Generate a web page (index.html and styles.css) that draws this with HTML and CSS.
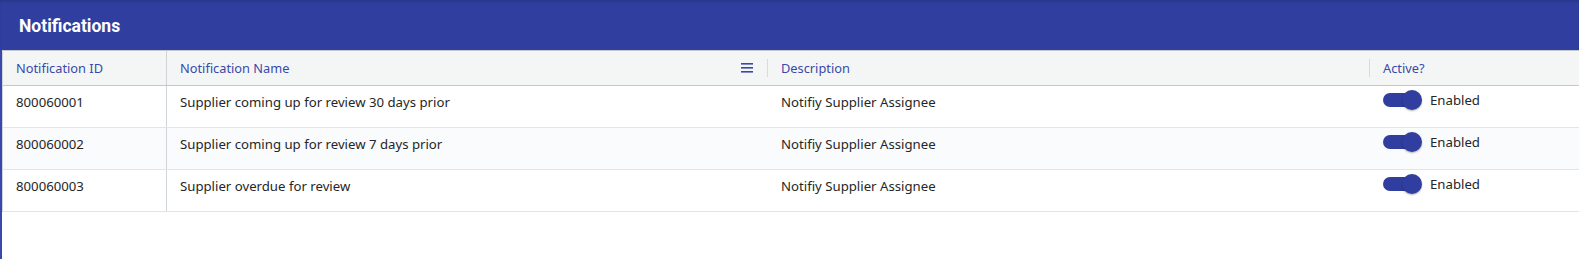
FILE: index.html
```html
<!DOCTYPE html>
<html lang="en">
<head>
  <meta charset="UTF-8">
  <title>Notifications</title>
  <link rel="stylesheet" href="styles.css">
</head>
<body>

  <div class="panel">
    <div class="panel-title">Notifications</div>

    <div class="grid">
      <div class="row head">
        <div class="cell c-id">Notification ID</div>
        <div class="cell c-name">
          <span>Notification Name</span>
          <svg class="menu" width="12" height="10" viewBox="0 0 12 10">
            <rect x="0" y="0" width="12" height="1.6" fill="#3949ab"/>
            <rect x="0" y="4" width="12" height="1.6" fill="#3949ab"/>
            <rect x="0" y="8" width="12" height="1.6" fill="#3949ab"/>
          </svg>
          <span class="handle"></span>
        </div>
        <div class="cell c-desc">
          <span>Description</span>
          <span class="handle"></span>
        </div>
        <div class="cell c-active">Active?</div>
      </div>

      <div class="row">
        <div class="cell c-id">800060001</div>
        <div class="cell c-name">Supplier coming up for review 30 days prior</div>
        <div class="cell c-desc">Notifiy Supplier Assignee</div>
        <div class="cell c-active"><span class="toggle"><span class="knob"></span></span>Enabled</div>
      </div>

      <div class="row alt">
        <div class="cell c-id">800060002</div>
        <div class="cell c-name">Supplier coming up for review 7 days prior</div>
        <div class="cell c-desc">Notifiy Supplier Assignee</div>
        <div class="cell c-active"><span class="toggle"><span class="knob"></span></span>Enabled</div>
      </div>

      <div class="row">
        <div class="cell c-id">800060003</div>
        <div class="cell c-name">Supplier overdue for review</div>
        <div class="cell c-desc">Notifiy Supplier Assignee</div>
        <div class="cell c-active"><span class="toggle"><span class="knob"></span></span>Enabled</div>
      </div>
    </div>
  </div>

</body>
</html>
```

FILE: styles.css
```css
body {
  margin: 0;
  font-family: "Noto Sans", "Open Sans", sans-serif;
  background-color: white;
}

.panel {
  height: 259px;
  border-left: 2px solid #3949ab;
  box-sizing: border-box;
}

.panel-title {
  height: 50px;
  margin-left: -2px;
  background-color: #303f9f;
  color: white;
  font-family: Roboto, sans-serif;
  font-weight: bold;
  font-size: 17.5px;
  line-height: 52px;
  padding-left: 19px;
  box-shadow: inset 0 2px 2px rgba(0,0,0,0.12);
}

.grid {
  border-left: 1px solid #cfd4d8;
}

.row {
  display: grid;
  grid-template-columns: 164px 601px 602px 1fr;
  height: 41px;
  border-bottom: 1px solid #e2e5e8;
  font-size: 13.2px;
  color: #262626;
}

.row.alt {
  background-color: #fafbfd;
}

.row.head {
  height: 34px;
  background-color: #f4f6f5;
  border-top: 1px solid #c4c8cc;
  border-bottom: 1px solid #c4c8cc;
  color: #3949ab;
  font-size: 12.8px;
}

.cell {
  display: flex;
  align-items: center;
  padding-left: 13px;
  padding-bottom: 9px;
}

.head .cell {
  padding-bottom: 0;
}

.c-id {
  border-right: 1px solid #cfd4d8;
}

.c-name, .c-desc {
  position: relative;
}

.head .c-name {
  padding-right: 10px;
}

.c-name span:first-child, .c-desc span:first-child {
  flex: 1;
}

.menu {
  margin-right: 5px;
}

.handle {
  position: absolute;
  right: 0;
  top: 8px;
  width: 1px;
  height: 18px;
  background-color: #d8dcdf;
}

.row .c-active {
  padding-bottom: 13px;
}

.head .c-active {
  padding-bottom: 0;
}

.toggle {
  position: relative;
  display: inline-block;
  width: 33px;
  height: 14px;
  margin: 0 14px 0 0;
  border-radius: 7px;
  background-color: #303f9f;
}

.knob {
  position: absolute;
  right: -6px;
  top: -3px;
  width: 20px;
  height: 20px;
  border-radius: 50%;
  background-color: #303f9f;
  box-shadow: 0 1px 2px rgba(0,0,0,0.3);
}
```
